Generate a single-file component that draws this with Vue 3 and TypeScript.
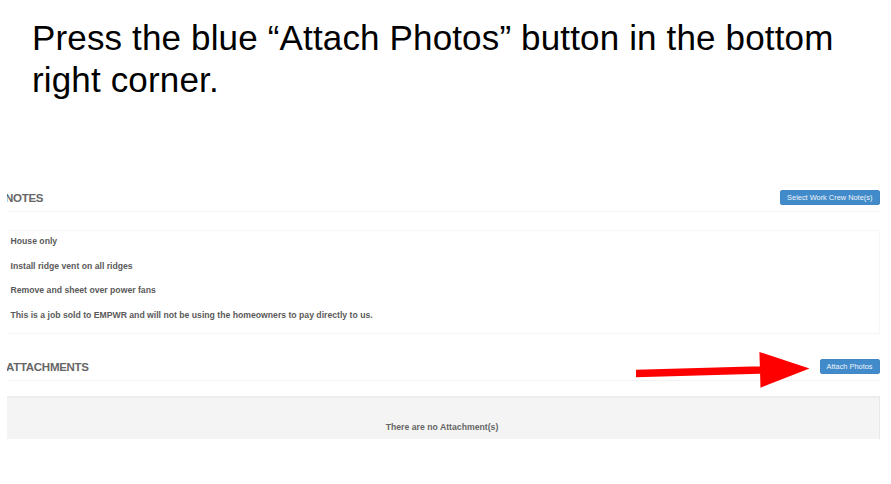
<script setup lang="ts">
const notes: string[] = [
  'House only',
  'Install ridge vent on all ridges',
  'Remove and sheet over power fans',
  'This is a job sold to EMPWR and will not be using the homeowners to pay directly to us.',
]
</script>

<template>
  <main class="slide">
    <h1 class="title">Press the blue “Attach Photos” button in the bottom<br />right corner.</h1>
    <div class="capture">
      <section>
        <header class="bar">
          <h2 class="heading notes-heading">NOTES</h2>
          <button class="btn wide" type="button"><span>Select Work Crew Note(s)</span></button>
        </header>
        <div class="notes">
          <p v-for="note in notes" :key="note"><span>{{ note }}</span></p>
        </div>
      </section>
      <section>
        <header class="bar">
          <h2 class="heading attachments-heading">ATTACHMENTS</h2>
          <button class="btn" type="button"><span>Attach Photos</span></button>
        </header>
        <div class="empty">There are no Attachment(s)</div>
      </section>
    </div>
    <svg class="arrow" viewBox="0 0 176 40" width="176" height="40" aria-hidden="true">
      <path d="M0 19.7 124 16.2V23.8L0 27.3Z M123.4 2 173.5 18.5 124.5 37.7Z" fill="#f00" />
    </svg>
  </main>
</template>

<style>
body {
  background: #fff;
}
</style>

<style scoped>
.slide {
  position: relative;
  box-sizing: border-box;
  width: 891px;
  height: 484px;
  padding: 17px 11px 0 7px;
  overflow: hidden;
  font-family: "Liberation Sans", Arial, sans-serif;
}
.title {
  margin: 0;
  padding-left: 25px;
  height: 168px;
  font-size: 35px;
  font-weight: 400;
  line-height: 42px;
  letter-spacing: 0.15px;
  white-space: nowrap;
  color: #000;
}
.capture {
  width: 873px;
  height: 254px;
  overflow: hidden;
}
.bar {
  display: flex;
  justify-content: space-between;
  box-sizing: border-box;
  height: 27px;
  padding-top: 5px;
  border-bottom: 1px solid #f3f3f3;
}
.heading {
  margin: 0;
  font-size: 11.5px;
  font-weight: 700;
  line-height: 17px;
  letter-spacing: -0.28px;
  color: #666;
}
.notes-heading {
  margin-left: -2px;
}
.attachments-heading {
  margin-left: -1px;
}
.btn {
  display: flex;
  align-items: center;
  justify-content: center;
  width: 60px;
  height: 15px;
  margin-right: 0.5px;
  padding: 0;
  border: 1px solid #4288c5;
  border-radius: 2px;
  background: #428bca;
  color: #eef5fb;
  font-family: inherit;
  font-size: 7.4px;
  line-height: 13px;
  white-space: nowrap;
}
.wide {
  width: 99.5px;
}
.notes {
  box-sizing: border-box;
  height: 104px;
  margin: 18px 0 20px;
  padding: 4px 0 0 3.5px;
  border: 1px solid #f6f6f6;
  border-left: 0;
}
.notes p {
  margin: 0 0 12.7px;
  font-size: 8.67px;
  font-weight: 700;
  line-height: 12px;
  color: #5a5a5a;
}
.empty {
  box-sizing: border-box;
  height: 60px;
  margin-top: 15px;
  padding: 23px 2px 0 0;
  border-top: 2px solid #ececec;
  border-right: 1px solid #e8e8e8;
  background: #f4f4f4;
  color: #666;
  font-size: 8.7px;
  font-weight: 700;
  line-height: 12px;
  text-align: center;
}
.arrow {
  position: absolute;
  left: 636px;
  top: 350px;
}
</style>
